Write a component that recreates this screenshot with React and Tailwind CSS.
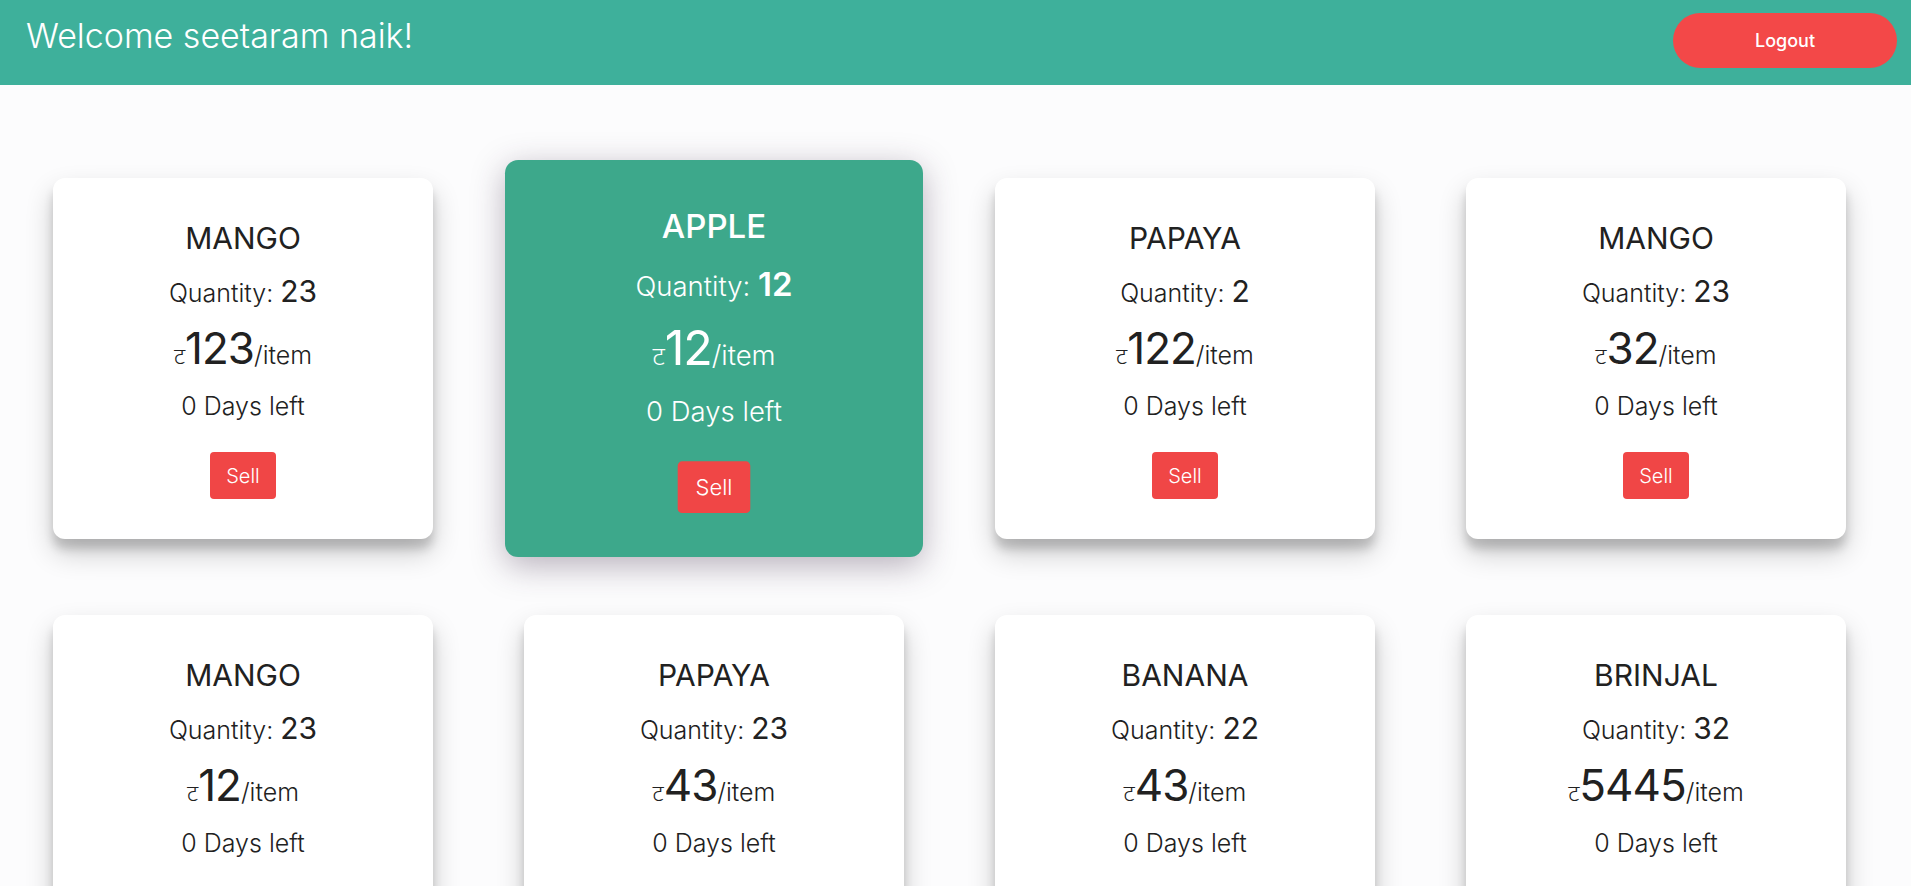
import React from 'react';

const items = [
  { name: 'MANGO', qty: 23, price: 123, days: 0 },
  { name: 'APPLE', qty: 12, price: 12, days: 0, active: true },
  { name: 'PAPAYA', qty: 2, price: 122, days: 0 },
  { name: 'MANGO', qty: 23, price: 32, days: 0 },
  { name: 'MANGO', qty: 23, price: 12, days: 0 },
  { name: 'PAPAYA', qty: 23, price: 43, days: 0 },
  { name: 'BANANA', qty: 22, price: 43, days: 0 },
  { name: 'BRINJAL', qty: 32, price: 5445, days: 0 },
  { name: 'TOMATO', qty: 15, price: 20, days: 0 },
  { name: 'ONION', qty: 40, price: 30, days: 0 },
  { name: 'POTATO', qty: 18, price: 25, days: 0 },
  { name: 'CARROT', qty: 9, price: 35, days: 0 },
];

const ItemCard = ({ item }) => {
  const active = item.active;
  return (
    <div
      className={
        active
          ? 'w-[380px] h-[361px] rounded-[12px] bg-[#3da88b] text-white flex flex-col items-center pt-[40px] scale-110 shadow-[0_8px_30px_rgba(60,40,70,0.35)]'
          : 'w-[380px] h-[361px] rounded-[12px] bg-white text-[#212121] flex flex-col items-center pt-[40px] shadow-[0_14px_28px_rgba(0,0,0,0.2),0_10px_10px_rgba(0,0,0,0.16)]'
      }
    >
      <h2 className={active ? 'text-[30px] leading-[40px] font-medium' : 'text-[30px] leading-[40px] font-normal'}>
        {item.name}
      </h2>
      <p className="mt-[13px] text-[25px] leading-[40px] font-light">
        Quantity: <span className={active ? 'text-[30px] font-semibold' : 'text-[30px] font-normal'}>{item.qty}</span>
      </p>
      <p className="mt-[10px] text-[25px] leading-[50px] font-light">
        <span className="text-[23px]">ट</span>
        <span className="text-[44px] font-normal tracking-[-1px]">{item.price}</span>/item
      </p>
      <p className="mt-[5px] text-[25px] leading-[40px] font-light">{item.days} Days left</p>
      <button className="mt-[26px] h-[47px] px-[16px] rounded-[4px] bg-[#f04646] text-white text-[20px] font-light">
        Sell
      </button>
    </div>
  );
};

const App = () => {
  return (
    <div className="min-h-screen bg-[#fcfcfd] font-['Inter','Noto_Sans',sans-serif]">
      {/* Header */}
      <header className="h-[85px] bg-[#3eb09b] flex items-start justify-between">
        <h1 className="pl-[26px] pt-[15px] text-[34px] leading-[42px] font-light text-white">Welcome seetaram naik!</h1>
        <button className="mt-[13px] mr-[14px] w-[224px] h-[55px] rounded-full bg-[#f34848] text-white text-[18px] font-medium">
          Logout
        </button>
      </header>

      {/* Items */}
      <main className="pt-[93px] pb-[40px] pl-[53px] grid grid-cols-[repeat(4,380px)] gap-x-[91px] gap-y-[76px]">
        {items.map((item, i) => (
          <ItemCard key={i} item={item} />
        ))}
      </main>
    </div>
  );
};

export default App;
